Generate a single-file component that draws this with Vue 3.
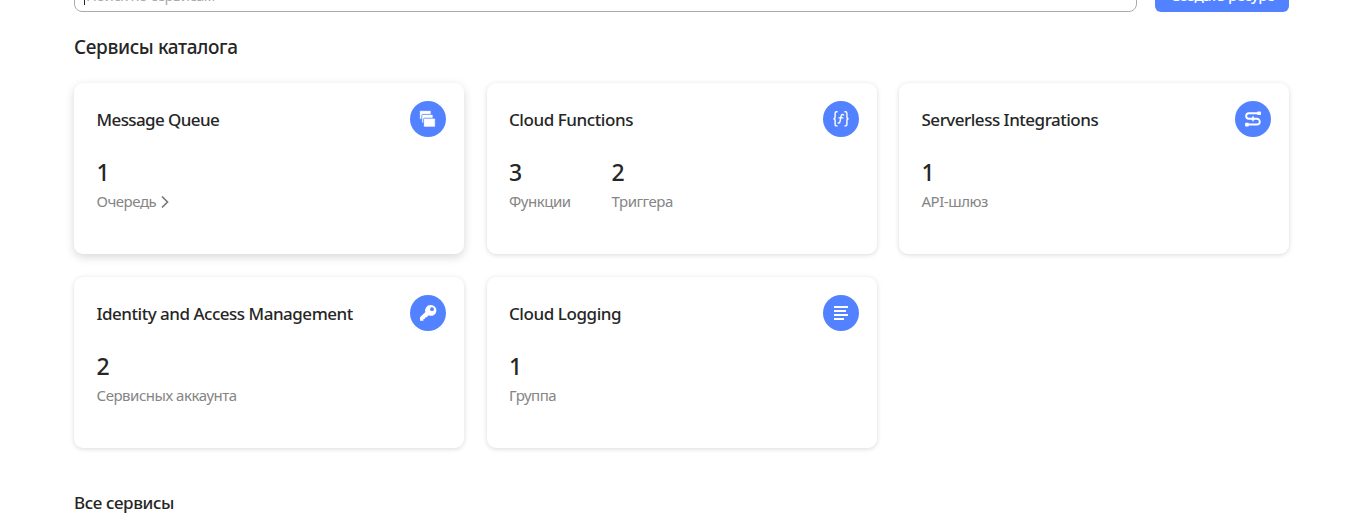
<script setup>
const cards = [
  { title: 'Message Queue', icon: 'queue', w: 't1', active: true, stats: [{ n: 1, label: 'Очередь', arrow: true }] },
  { title: 'Cloud Functions', icon: 'func', w: 't2', stats: [{ n: 3, label: 'Функции' }, { n: 2, label: 'Триггера' }] },
  { title: 'Serverless Integrations', icon: 'flow', w: 't3', stats: [{ n: 1, label: 'API-шлюз' }] },
  { title: 'Identity and Access Management', icon: 'key', w: 't4', stats: [{ n: 2, label: 'Сервисных аккаунта' }] },
  { title: 'Cloud Logging', icon: 'log', w: 't5', stats: [{ n: 1, label: 'Группа' }] },
]
</script>

<template>
  <main class="page">
    <div class="toolbar">
      <div class="search"><i class="caret"></i><span>Поиск по сервисам</span></div>
      <button class="create">Создать ресурс</button>
    </div>
    <h2 class="heading">Сервисы каталога</h2>
    <section class="grid">
      <article v-for="c in cards" :key="c.title" class="card" :class="{ active: c.active }">
        <header class="head">
          <h3 :class="c.w">{{ c.title }}</h3>
          <svg class="icon" viewBox="0 0 36 36">
            <circle cx="18" cy="18" r="18" fill="#5282ff" />
            <g v-if="c.icon === 'queue'" fill="#fff" stroke="#5282ff" stroke-width=".8">
              <rect x="9.600" y="9.600" width="11.500" height="8.600" rx=".9" />
              <rect x="11.800" y="13.400" width="11.200" height="8.600" rx=".9" />
              <rect x="13.600" y="17.200" width="11.700" height="8.900" rx=".9" />
            </g>
            <g v-else-if="c.icon === 'func'" fill="none" stroke="#fff" stroke-width="1.4" stroke-linecap="round">
              <path d="M14.100 10.800h-.5c-1 0-1.500.5-1.500 1.500v3.400c0 1.300-.6 2-1.700 2 1.100 0 1.700.7 1.700 2v3.700c0 1 .5 1.500 1.500 1.500h.5" />
              <path d="M21.900 10.800h.5c1 0 1.500.5 1.500 1.500v3.400c0 1.300.6 2 1.700 2-1.100 0-1.700.7-1.700 2v3.700c0 1-.5 1.500-1.500 1.500h-.5" />
              <path d="M20.600 13.800c-1.300-.7-2.200-.1-2.500 1.300l-1.100 5.500c-.3 1.200-.9 1.600-1.900 1.300M16 16.900h3.900" />
            </g>
            <g v-else-if="c.icon === 'flow'" fill="none" stroke="#fff" stroke-width="1.900" stroke-linecap="round">
              <path d="M23.500 12.300H13.900a2.750 2.750 0 0 0 0 5.500h8a2.850 2.850 0 0 1 0 5.700H12.500" />
              <path d="M18 14.600l1 2.200 2.200 1-2.200 1-1 2.200-1-2.200-2.200-1 2.200-1z" fill="#fff" stroke="none" />
              <rect x="22.200" y="10.400" width="3.700" height="3.700" rx=".7" fill="#fff" stroke="none" />
              <rect x="10.100" y="21.700" width="3.700" height="3.700" rx=".7" fill="#fff" stroke="none" />
            </g>
            <g v-else-if="c.icon === 'key'">
              <path d="M20.500 10a5.300 5.300 0 0 0-5.100 6.900L10 22.300v3.500h3.400v-1.700h1.500v-1.600h1.500l2.400-2.200A5.400 5.400 0 1 0 20.500 10z" fill="#fff" />
              <circle cx="22" cy="14.200" r="1.900" fill="#5282ff" />
            </g>
            <path v-else d="M11 12h14M11 16h12M11 20h14M11 24h10" fill="none" stroke="#fff" stroke-width="2" />
          </svg>
        </header>
        <div class="stats">
          <div v-for="s in c.stats" :key="s.label" class="stat">
            <div class="num">{{ s.n }}</div>
            <div class="label">
              <span>{{ s.label }}</span>
              <svg v-if="s.arrow" class="arrow" viewBox="0 0 8 14"><path d="M1 1.500l5.500 5.500L1 12.500" fill="none" stroke="#777" stroke-width="1.700" /></svg>
            </div>
          </div>
        </div>
      </article>
    </section>
    <h2 class="all">Все сервисы</h2>
  </main>
</template>

<style>
body { background: #fff; }
</style>

<style scoped>
.page { box-sizing: border-box; width: 1358px; height: 518px; padding: 0 69px 0 74px; overflow: hidden; background: #fff; color: #262626; font-family: "Noto Sans", "Open Sans", sans-serif; }
.toolbar { display: flex; align-items: flex-end; gap: 18px; height: 12px; overflow: hidden; }
.search { box-sizing: border-box; flex: none; display: flex; align-items: center; width: 1063px; height: 36px; padding: 0 9px; border: 1px solid #aaa; border-radius: 8px; font-size: 15px; color: #aaa; }
.search span { margin-left: 1px; padding-top: 1px; letter-spacing: -.68px; white-space: nowrap; }
.caret { width: 1px; height: 22px; background: #222; }
.create { flex: none; width: 134px; height: 36px; padding: 1px 0 0; border: 0; border-radius: 6px; background: #5282ff; color: #fff; font: 500 15px "Noto Sans", sans-serif; letter-spacing: -.7px; white-space: nowrap; }
h2, h3 { margin: 0; font-weight: 500; white-space: nowrap; }
.heading { height: 71px; line-height: 71px; font-size: 19px; letter-spacing: -.38px; }
.grid { display: grid; grid-template-columns: repeat(3, 390px); grid-auto-rows: 171px; gap: 23px 22.5px; }
.card { box-sizing: border-box; padding: 18px 18px 0 22.5px; border-radius: 9px; background: #fff; box-shadow: 0 1px 5px rgba(0, 0, 0, .15); }
.card.active { box-shadow: 0 3px 10px rgba(0, 0, 0, .16); }
.head { display: flex; justify-content: space-between; height: 36px; }
.head h3 { font-size: 17px; line-height: 37px; letter-spacing: -.49px; }
.head .t1 { letter-spacing: -.6px; }
.head .t2, .head .t5 { letter-spacing: -.43px; }
.icon { flex: none; width: 36px; height: 36px; }
.stats { display: flex; gap: 41px; margin-top: 19px; }
.num { font-size: 23px; line-height: 32px; font-weight: 500; }
.label { display: flex; align-items: center; height: 26px; font-size: 15px; line-height: 26px; letter-spacing: -.47px; color: #858585; white-space: nowrap; }
.arrow { width: 8px; height: 14px; margin: 2px 0 0 4.5px; }
.all { margin-top: 43px; font-size: 17px; line-height: 24px; letter-spacing: -.38px; }
</style>
